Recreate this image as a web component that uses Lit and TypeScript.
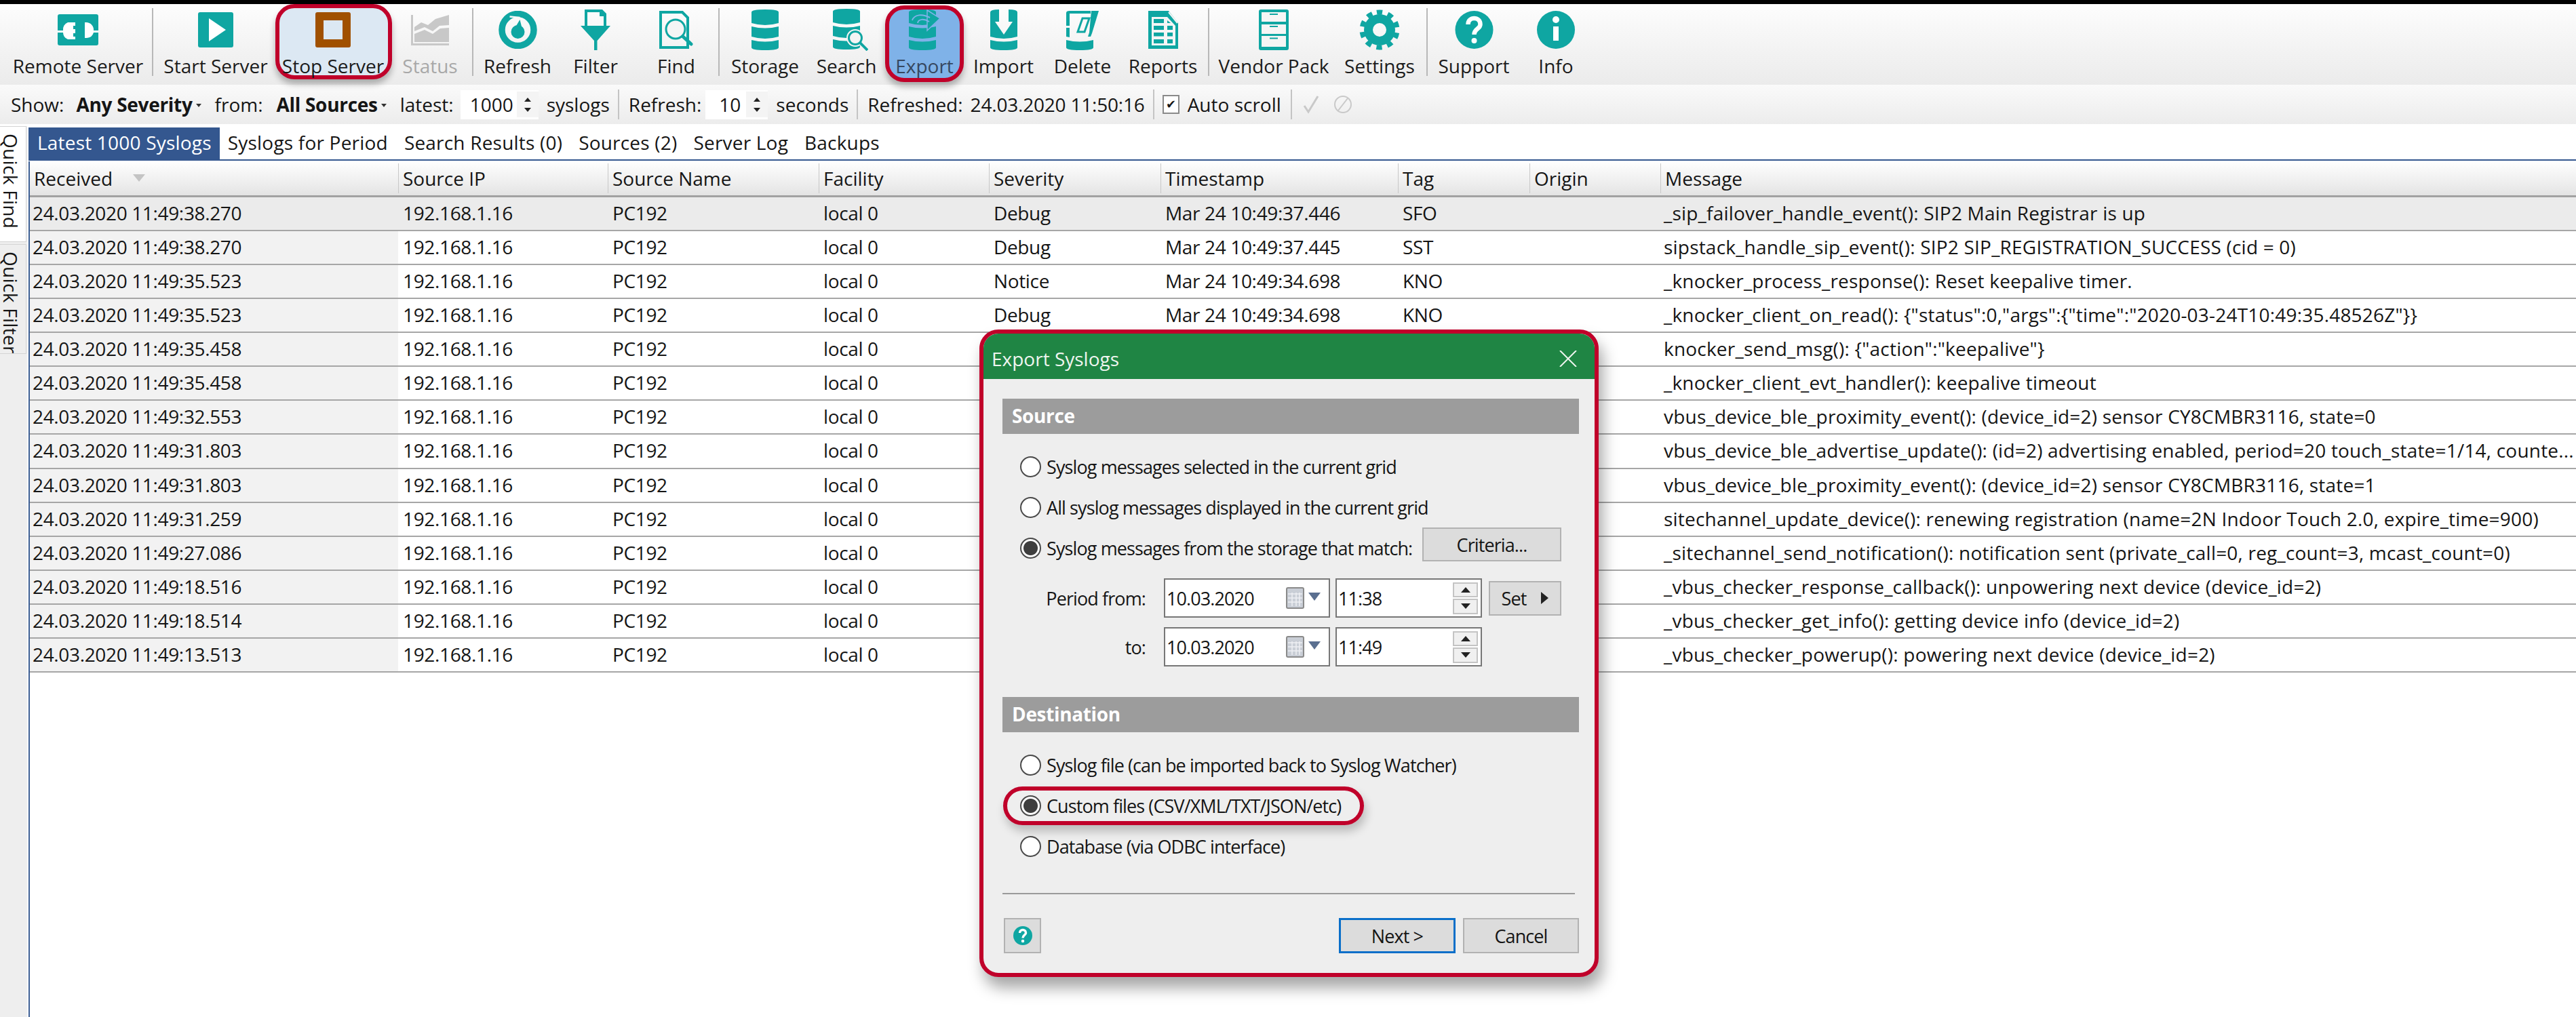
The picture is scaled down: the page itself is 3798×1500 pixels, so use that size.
import { LitElement, html, css } from "lit";
import { customElement } from "lit/decorators.js";

const T = "#0fa6a2";

const seg1 = "M0 4Q0 0 20 0T40 4V20Q20 26 0 20Z";
const seg2 = "M0 25Q20 30 40 25V40Q20 46 0 40Z";
const seg3 = "M0 45Q20 50 40 45V56Q40 60 20 60T0 56Z";

const icons: Record<string, unknown> = {
  remote: html`<svg width="60" height="46" viewBox="0 0 60 46">
    <rect width="60" height="46" rx="3" fill="${T}" />
    <path fill="#fff" d="M0 24h8a11 11 0 0 1 7-12h11v5h-3v5h3v6h-3v5h3v4H15a11 11 0 0 1-7-10H0Z" />
    <path fill="#fff" d="M40 12h3a11 11 0 0 1 10 12h7v3h-7a11 11 0 0 1-10 8h-3Z" />
  </svg>`,
  start: html`<svg width="52" height="52" viewBox="0 0 52 52">
    <rect width="52" height="52" rx="3" fill="${T}" />
    <path fill="#fff" d="M16 9L41 26L16 43Z" />
  </svg>`,
  stop: html`<svg width="52" height="52" viewBox="0 0 52 52">
    <path fill="#a05000" fill-rule="evenodd" d="M3 0H49Q52 0 52 3V49Q52 52 49 52H3Q0 52 0 49V3Q0 0 3 0ZM12 12V40H40V12Z" />
  </svg>`,
  status: html`<svg width="56" height="45" viewBox="0 0 56 45">
    <path fill="#c8c8c8" d="M0 0H3V42H56V45H0Z" />
    <path fill="#c8c8c8" d="M5 18L15 11L25 15L36 6L56 0V15L42 16L32 24L20 18L5 24Z" />
    <path fill="#c8c8c8" d="M5 28L20 22L32 28L43 20L56 19V40H5Z" />
  </svg>`,
  refresh: html`<svg width="57" height="56" viewBox="0 0 56 56">
    <circle cx="28" cy="28" r="23.5" fill="none" stroke="${T}" stroke-width="9.5" />
    <path stroke="#f7f7f7" stroke-width="2.5" fill="none" d="M16 8.500L31 10" />
    <circle cx="28" cy="31" r="10" fill="${T}" />
    <path fill="${T}" d="M25 23L31 13L34 25Z" />
  </svg>`,
  filter: html`<svg width="44" height="60" viewBox="0 0 44 60">
    <path fill="${T}" fill-rule="evenodd" d="M6 0H32L38 6V26H6ZM10 4V24H34V10H28V4Z" />
    <path fill="${T}" d="M0 24H44L24.5 46V60H20V46Z" />
  </svg>`,
  find: html`<svg width="50" height="56" viewBox="0 0 50 56">
    <path fill="none" stroke="${T}" stroke-width="4" d="M2 2H34L42 10V54H2Z" />
    <circle cx="24" cy="27" r="14" fill="#f5f5f5" stroke="${T}" stroke-width="3" />
    <path stroke="${T}" stroke-width="5" stroke-linecap="round" d="M35 38L47 49" />
  </svg>`,
  storage: html`<svg width="40" height="60" viewBox="0 0 40 60">
    <path fill="${T}" d="${seg1}" /><path fill="${T}" d="${seg2}" /><path fill="${T}" d="${seg3}" />
  </svg>`,
  search: html`<svg width="64" height="62" viewBox="-12 0 64 62">
    <path fill="${T}" d="${seg1}" /><path fill="${T}" d="${seg2}" /><path fill="${T}" d="${seg3}" />
    <circle cx="33" cy="43" r="13" fill="#f4f4f4" />
    <circle cx="33" cy="43" r="9.5" fill="#f4f4f4" stroke="${T}" stroke-width="3" />
    <path stroke="${T}" stroke-width="4" d="M40 50L51 61" />
  </svg>`,
  export: html`<svg width="47" height="60" viewBox="0 0 47 60">
    <path fill="${T}" d="${seg1}" /><path fill="${T}" d="${seg2}" /><path fill="${T}" d="${seg3}" />
    <path fill="${T}" stroke="#7fb2e8" stroke-width="1.5" d="M27 1L46 13L27 31Z" />
    <path fill="none" stroke="#7fb2e8" stroke-width="2" d="M5 16C8 7 20 6 31 12M13 20C14 14 22 13 30 18" />
  </svg>`,
  import: html`<svg width="40" height="60" viewBox="0 0 40 60">
    <path fill="${T}" d="M0 4Q0 0 13 0V18H7L20 37L33 18H27V0Q40 0 40 4V40Q20 46 0 40Z" />
    <path fill="${T}" d="${seg3}" />
  </svg>`,
  delete: html`<svg width="48" height="60" viewBox="0 0 48 60">
    <path fill="${T}" d="M0 5Q0 2 5 2H36V6H5V24H0ZM0 27H5V41L0 40Z" />
    <path fill="${T}" d="M37 2H48L38 35L36 40H32L34 34Z" />
    <path fill="none" stroke="${T}" stroke-width="3" d="M24 13H34L27 33H17Z" />
    <path fill="${T}" d="${seg3}" />
  </svg>`,
  reports: html`<svg width="44" height="56" viewBox="0 0 44 56">
    <path fill="${T}" d="M0 0H30L44 18V56H0Z" />
    <path fill="#f5f5f5" d="M5 9H28L40 22V51H5Z" />
    <path stroke="#f5f5f5" stroke-width="2" d="M30 2L43 18" />
    <path fill="${T}" d="M8 12H23V18H8ZM28 14V18H33ZM8 22H23V28H8ZM28 22H36V28H28ZM8 32H23V37.5H8ZM28 32H36V37.5H28ZM8 42H23V48H8ZM28 42H36V48H28Z" />
  </svg>`,
  vendor: html`<svg width="44" height="60" viewBox="0 0 44 60">
    <rect width="44" height="60" rx="3" fill="${T}" />
    <path fill="#f5f5f5" d="M4 4H40V18H4ZM4 22H40V36H4ZM4 39H40V55H4Z" />
    <path fill="${T}" d="M16 6H28V8H16ZM16 24H28V26H16ZM16 41.500H28V43.500H16Z" />
  </svg>`,
  settings: html`<svg width="60" height="60" viewBox="0 0 60 60">
    <circle cx="30" cy="30" r="16.5" fill="none" stroke="${T}" stroke-width="13" />
    <circle cx="30" cy="30" r="26" fill="none" stroke="${T}" stroke-width="7" stroke-dasharray="8.17 8.17" transform="rotate(-99 30 30)" />
  </svg>`,
  support: html`<svg width="57" height="56" viewBox="0 0 56 56">
    <circle cx="28" cy="28" r="28" fill="${T}" />
    <path fill="none" stroke="#fff" stroke-width="6.500" d="M19 20C19 8 37 8 37 20C37 27 28 26 28 35" />
    <circle cx="28" cy="44" r="4" fill="#fff" />
  </svg>`,
  info: html`<svg width="56" height="56" viewBox="0 0 56 56">
    <circle cx="28" cy="28" r="28" fill="${T}" />
    <circle cx="28" cy="13" r="5" fill="#fff" />
    <path fill="#fff" d="M24 23H32V44H24Z" />
  </svg>`,
};

type Tool = { label?: string; icon?: string; w?: number; ml?: number; cls?: string; sep?: boolean };

const tools: Tool[] = [
  { label: "Remote Server", icon: "remote", w: 218 },
  { sep: true },
  { label: "Start Server", icon: "start", w: 184 },
  { label: "Stop Server", icon: "stop", w: 162, cls: "stop" },
  { label: "Status", icon: "status", w: 124, cls: "off" },
  { sep: true },
  { label: "Refresh", icon: "refresh", w: 130 },
  { label: "Filter", icon: "filter", w: 100 },
  { label: "Find", icon: "find", w: 124, ml: 7 },
  { sep: true },
  { label: "Storage", icon: "storage", w: 134 },
  { label: "Search", icon: "search", w: 106 },
  { label: "Export", icon: "export", w: 124, cls: "export" },
  { label: "Import", icon: "import", w: 109 },
  { label: "Delete", icon: "delete", w: 124 },
  { label: "Reports", icon: "reports", w: 113 },
  { sep: true, ml: 10 },
  { label: "Vendor Pack", icon: "vendor", w: 190 },
  { label: "Settings", icon: "settings", w: 122 },
  { sep: true, ml: 8 },
  { label: "Support", icon: "support", w: 136 },
  { label: "Info", icon: "info", w: 106 },
];

const head = ["Received", "Source IP", "Source Name", "Facility", "Severity", "Timestamp", "Tag", "Origin", "Message"];

// rows 5 and below have their severity, timestamp and tag under the dialog
const rows: string[][] = [
  ["38.270", "Debug", "Mar 24 10:49:37.446", "SFO", "_sip_failover_handle_event(): SIP2 Main Registrar is up"],
  ["38.270", "Debug", "Mar 24 10:49:37.445", "SST", "sipstack_handle_sip_event(): SIP2 SIP_REGISTRATION_SUCCESS (cid = 0)"],
  ["35.523", "Notice", "Mar 24 10:49:34.698", "KNO", "_knocker_process_response(): Reset keepalive timer."],
  ["35.523", "Debug", "Mar 24 10:49:34.698", "KNO", '_knocker_client_on_read(): {"status":0,"args":{"time":"2020-03-24T10:49:35.48526Z"}}'],
  ["35.458", "", "", "", 'knocker_send_msg(): {"action":"keepalive"}'],
  ["35.458", "", "", "", "_knocker_client_evt_handler(): keepalive timeout"],
  ["32.553", "", "", "", "vbus_device_ble_proximity_event(): (device_id=2) sensor CY8CMBR3116, state=0"],
  ["31.803", "", "", "", "vbus_device_ble_advertise_update(): (id=2) advertising enabled, period=20 touch_state=1/14, counte..."],
  ["31.803", "", "", "", "vbus_device_ble_proximity_event(): (device_id=2) sensor CY8CMBR3116, state=1"],
  ["31.259", "", "", "", "sitechannel_update_device(): renewing registration (name=2N Indoor Touch 2.0, expire_time=900)"],
  ["27.086", "", "", "", "_sitechannel_send_notification(): notification sent (private_call=0, reg_count=3, mcast_count=0)"],
  ["18.516", "", "", "", "_vbus_checker_response_callback(): unpowering next device (device_id=2)"],
  ["18.514", "", "", "", "_vbus_checker_get_info(): getting device info (device_id=2)"],
  ["13.513", "", "", "", "_vbus_checker_powerup(): powering next device (device_id=2)"],
];

const calendar = html`<svg class="cal" width="27" height="32" viewBox="0 0 27 32">
  <rect x="1" y="1" width="25" height="30" rx="2" fill="#c9ced6" stroke="#8a8a8a" stroke-width="2" />
  <path stroke="#eef0f3" stroke-width="1.500" d="M3 10H24M3 16H24M3 22H24M9 8V28M15 8V28M20 8V28" />
</svg>`;

@customElement("app-root")
export class AppRoot extends LitElement {
  static styles = css`
    :host {
      display: block;
      position: relative;
      width: 3798px;
      height: 1500px;
      overflow: hidden;
      background: #fff;
      font-family: "Open Sans", "Noto Sans", sans-serif;
      font-size: 28px;
      color: #151515;
      white-space: nowrap;
    }
    .top {
      height: 6px;
      background: #000;
    }
    .toolbar {
      display: flex;
      height: 119px;
      background: linear-gradient(#fdfdfd, #ebebeb);
      box-sizing: border-box;
      padding-left: 6px;
    }
    .tool {
      position: relative;
      display: flex;
      flex-direction: column;
      align-items: center;
      flex: none;
      isolation: isolate;
    }
    .ico {
      height: 66px;
      margin-top: 5px;
      display: flex;
      align-items: center;
      justify-content: center;
    }
    .lbl {
      line-height: 40px;
      color: #1b1b1b;
    }
    .off .lbl {
      color: #a8a8a8;
    }
    .ring {
      position: absolute;
      z-index: -1;
      box-sizing: border-box;
      border: 6px solid #c0002a;
      border-radius: 28px;
      box-shadow: 0 7px 10px rgba(0, 0, 0, 0.28);
    }
    .stop .ring {
      left: -4px;
      right: -6px;
      top: 0;
      height: 111px;
      background: #dce8f3;
    }
    .export .ring {
      left: 4px;
      right: 4px;
      top: 2px;
      height: 113px;
      background: #7fb2e8;
    }
    .export .lbl {
      color: #36485f;
    }
    .sep {
      flex: none;
      width: 2px;
      height: 100px;
      margin-top: 6px;
      background: #b8b8b8;
    }
    .filters {
      display: flex;
      align-items: center;
      height: 58px;
      padding-left: 16px;
      background: linear-gradient(#fafafa, #ececec);
    }
    .filters b {
      font-weight: 700;
      letter-spacing: -0.3px;
    }
    .drop {
      width: 0;
      height: 0;
      margin: 2px 0 0 5px;
      border: 4px solid transparent;
      border-top: 5px solid #333;
      border-bottom: 0;
    }
    .spin {
      display: flex;
      align-items: center;
      justify-content: space-between;
      box-sizing: border-box;
      height: 43px;
      background: #fff;
      padding-left: 14px;
    }
    .spin-1000 {
      width: 115px;
      margin-left: 10px;
    }
    .spin-10 {
      width: 92px;
      margin-left: 6px;
      padding-left: 20px;
    }
    .arrows {
      display: flex;
      flex-direction: column;
      gap: 9px;
      align-items: center;
      justify-content: center;
      width: 32px;
      height: 38px;
      background: #f4f4f4;
    }
    .up,
    .down {
      display: block;
      width: 0;
      height: 0;
      border: 5px solid transparent;
    }
    .up {
      border-bottom: 6px solid #222;
      border-top: 0;
    }
    .down {
      border-top: 6px solid #222;
      border-bottom: 0;
    }
    .vsep {
      width: 2px;
      height: 44px;
      background: #c4c4c4;
    }
    .ml11 { margin-left: 11px; }
    .ml12 { margin-left: 12px; }
    .ml14 { margin-left: 14px; }
    .ml16 { margin-left: 16px; }
    .ml18 { margin-left: 18px; }
    .ml20 { margin-left: 20px; }
    .ml21 { margin-left: 21px; }
    .stamp {
      letter-spacing: -0.2px;
    }
    .check {
      box-sizing: border-box;
      width: 25px;
      height: 28px;
      border: 2px solid #8a8a8a;
      background: #fff;
      text-align: center;
      line-height: 22px;
      font-size: 18px;
    }
    .main {
      display: flex;
      height: 1317px;
      padding-top: 3px;
      box-sizing: border-box;
    }
    .side {
      width: 40px;
      flex: none;
      background: #eee;
    }
    .vtab {
      box-sizing: border-box;
      width: 39px;
      writing-mode: vertical-rl;
      line-height: 28px;
      padding: 10px 8px 0 0;
      letter-spacing: 0.3px;
      border: 1px solid #d4d4d4;
      border-left: 0;
    }
    .vtab.on {
      height: 171px;
      background: #fff;
    }
    .vtab.rest {
      height: 162px;
      margin-top: 3px;
    }
    .content {
      flex: 1;
      margin-left: 2px;
      border-left: 2px solid #3d5f94;
      margin-top: 52px;
      min-width: 0;
    }
    .tabs {
      display: flex;
      height: 47px;
      margin: -50px 0 0 -2px;
      align-items: stretch;
      border-bottom: 2px solid #34578f;
      line-height: 44px;
      letter-spacing: 0.2px;
    }
    .tab {
      padding: 0 12px;
    }
    .tab.on {
      padding: 0 12px 0 13px;
      background: #34578f;
      color: #fff;
    }
    .grid-row {
      display: grid;
      grid-template-columns: 543px 309px 311px 251px 253px 350px 194px 193px 1fr;
    }
    .ghead {
      height: 54px;
      box-sizing: border-box;
      background: linear-gradient(#fff, #e4e4e4);
      border-bottom: 3px solid #a2a2a2;
      align-items: center;
    }
    .hcell {
      display: flex;
      align-items: center;
      height: 44px;
      padding-left: 6px;
      border-left: 1px solid #c8c8c8;
    }
    .hcell:first-child {
      border-left: 0;
    }
    .sort {
      width: 0;
      height: 0;
      margin-left: 30px;
      border: 9px solid transparent;
      border-top: 11px solid #c4c4c4;
      border-bottom: 0;
    }
    .row {
      height: 50.07px;
      box-sizing: border-box;
      border-bottom: 2px solid #a6a6a6;
      line-height: 46px;
      letter-spacing: -0.35px;
    }
    .cell {
      padding-left: 7px;
      overflow: hidden;
    }
    .cell:first-child {
      padding-left: 4px;
      background: #f2f2f2;
    }
    .row.first,
    .row.first .cell:first-child {
      background: #ebebeb;
    }
    .cell:last-child {
      padding-left: 5px;
      letter-spacing: 0.2px;
    }
    .dialog {
      position: absolute;
      left: 1444px;
      top: 486px;
      width: 913px;
      height: 955px;
      box-sizing: border-box;
      border: 6px solid #c0002a;
      border-radius: 28px;
      background: #eee;
      box-shadow: 6px 16px 22px rgba(0, 0, 0, 0.35);
      overflow: hidden;
    }
    .title {
      display: flex;
      align-items: center;
      justify-content: space-between;
      height: 67px;
      padding: 7px 26px 0 12px;
      box-sizing: border-box;
      background: #1f8544;
      color: #eef5ef;
    }
    .body {
      padding: 29px 23px 0 28px;
      font-size: 27px;
      letter-spacing: -0.9px;
    }
    .section {
      height: 52px;
      line-height: 50px;
      padding-left: 14px;
      background: #9c9c9c;
      color: #fff;
      font-size: 28px;
      font-weight: 700;
      letter-spacing: -0.35px;
    }
    .radios {
      margin-top: 18px;
      padding-left: 26px;
    }
    .radio-row {
      position: relative;
      display: flex;
      align-items: center;
      height: 60px;
      gap: 8px;
    }
    .radio {
      box-sizing: border-box;
      width: 31px;
      height: 31px;
      flex: none;
      border: 2px solid #4a4a4a;
      border-radius: 50%;
      background: #fff;
    }
    .radio.on {
      background: radial-gradient(circle, #3e3e3e 0 10px, #fff 11px);
    }
    .btn {
      display: flex;
      align-items: center;
      justify-content: center;
      box-sizing: border-box;
      height: 51px;
      background: #dcdcdc;
      border: 2px solid #b2b2b2;
    }
    .criteria {
      width: 205px;
      height: 50px;
      margin: -10px 26px 0 auto;
    }
    .period {
      display: flex;
      align-items: center;
      height: 58px;
    }
    .period.from {
      margin-top: 15px;
    }
    .period.till {
      margin-top: 14px;
    }
    .plabel {
      width: 211px;
      text-align: right;
      margin-right: 27px;
    }
    .field {
      display: flex;
      align-items: center;
      box-sizing: border-box;
      height: 58px;
      border: 2px solid #777;
      background: #fff;
      padding-left: 2px;
    }
    .date {
      width: 245px;
      margin-right: 8px;
    }
    .cal {
      margin-left: auto;
    }
    .caret {
      width: 0;
      height: 0;
      margin: 0 12px 4px 6px;
      border: 9px solid transparent;
      border-top: 12px solid #5a6f90;
      border-bottom: 0;
    }
    .time {
      width: 216px;
    }
    .tspin {
      display: flex;
      flex-direction: column;
      gap: 2px;
      box-sizing: border-box;
      width: 37px;
      height: 47px;
      margin-left: auto;
      margin-right: 4px;
    }
    .tspin span {
      flex: 1;
      display: flex;
      align-items: center;
      justify-content: center;
      background: #f0f0f0;
      border: 2px solid #c4c4c4;
    }
    .tspin .up,
    .tspin .down {
      border-width: 7px;
    }
    .tspin .up {
      border-bottom-width: 8px;
      border-top-width: 0;
    }
    .tspin .down {
      border-top-width: 8px;
      border-bottom-width: 0;
    }
    .set {
      width: 107px;
      margin-left: 10px;
      gap: 22px;
    }
    .tri {
      width: 0;
      height: 0;
      border: 9px solid transparent;
      border-left: 11px solid #222;
      border-right: 0;
    }
    .dest {
      margin-top: 45px;
    }
    .hl {
      position: absolute;
      left: -25px;
      top: 2px;
      width: 532px;
      height: 57px;
      box-sizing: border-box;
      border: 6px solid #c0002a;
      border-radius: 29px;
      box-shadow: 3px 9px 14px rgba(0, 0, 0, 0.22);
      pointer-events: none;
    }
    .rule {
      height: 2px;
      margin: 39px 6px 0 0;
      background: #9a9a9a;
    }
    .actions {
      display: flex;
      gap: 11px;
      margin-top: 35px;
    }
    .actions .btn {
      height: 52px;
    }
    .help {
      width: 55px;
      margin: 0 auto 0 2px;
    }
    .next {
      width: 172px;
      border: 3px solid #0a6fc9 !important;
    }
    .cancel {
      width: 171px;
    }
  `;

  renderTool(t: Tool) {
    const ml = t.ml ? `margin-left:${t.ml}px` : "";
    if (t.sep) return html`<div class="sep" style="${ml}"></div>`;
    return html`<div class="tool ${t.cls ?? ""}" style="width:${t.w}px;${ml}">
      ${t.cls === "stop" || t.cls === "export" ? html`<div class="ring"></div>` : ""}
      <div class="ico">${icons[t.icon!]}</div>
      <div class="lbl">${t.label}</div>
    </div>`;
  }

  renderFilters() {
    const spin = html`<span class="arrows"><span class="up"></span><span class="down"></span></span>`;
    return html`<div class="filters">
      <span>Show:</span>
      <b class="ml18">Any Severity</b><span class="drop"></span>
      <span class="ml20">from:</span>
      <b class="ml20">All Sources</b><span class="drop"></span>
      <span class="ml20">latest:</span>
      <div class="spin spin-1000"><span>1000</span>${spin}</div>
      <span class="ml12">syslogs</span>
      <div class="vsep ml12"></div>
      <span class="ml14">Refresh:</span>
      <div class="spin spin-10"><span>10</span>${spin}</div>
      <span class="ml12">seconds</span>
      <div class="vsep ml12"></div>
      <span class="ml14">Refreshed:</span>
      <span class="ml11 stamp">24.03.2020 11:50:16</span>
      <div class="vsep ml12"></div>
      <div class="check ml12">✔</div>
      <span class="ml12">Auto scroll</span>
      <div class="vsep ml14"></div>
      <svg class="ml16" width="24" height="28" viewBox="0 0 24 28">
        <path fill="none" stroke="#c9c9c9" stroke-width="3" d="M2 16L8 25L22 2" />
      </svg>
      <svg class="ml21" width="28" height="28" viewBox="0 0 28 28">
        <circle cx="14" cy="14" r="12" fill="none" stroke="#c9c9c9" stroke-width="2" />
        <path stroke="#c9c9c9" stroke-width="2" d="M7 23L21 5" />
      </svg>
    </div>`;
  }

  renderGrid() {
    return html`<div class="grid-row ghead">
        ${head.map(
          (h, i) => html`<div class="hcell">${h}${i === 0 ? html`<span class="sort"></span>` : ""}</div>`
        )}
      </div>
      ${rows.map(
        (r, i) => html`<div class="grid-row row ${i === 0 ? "first" : ""}">
          <div class="cell">24.03.2020 11:49:${r[0]}</div>
          <div class="cell">192.168.1.16</div>
          <div class="cell">PC192</div>
          <div class="cell">local 0</div>
          <div class="cell">${r[1]}</div>
          <div class="cell">${r[2]}</div>
          <div class="cell">${r[3]}</div>
          <div class="cell"></div>
          <div class="cell">${r[4]}</div>
        </div>`
      )}`;
  }

  renderPeriod(cls: string, label: string, time: string) {
    return html`<div class="period ${cls}">
      <span class="plabel">${label}</span>
      <div class="field date"><span>10.03.2020</span>${calendar}<span class="caret"></span></div>
      <div class="field time">
        <span>${time}</span>
        <div class="tspin"><span><i class="up"></i></span><span><i class="down"></i></span></div>
      </div>
      ${cls === "from" ? html`<div class="btn set"><span>Set</span><span class="tri"></span></div>` : ""}
    </div>`;
  }

  renderDialog() {
    return html`<div class="dialog">
      <div class="title">
        <span>Export Syslogs</span>
        <svg width="26" height="24" viewBox="0 0 26 24">
          <path stroke="#eef5ef" stroke-width="2" d="M1 0L25 24M25 0L1 24" />
        </svg>
      </div>
      <div class="body">
        <div class="section">Source</div>
        <div class="radios">
          <div class="radio-row"><span class="radio"></span>Syslog messages selected in the current grid</div>
          <div class="radio-row"><span class="radio"></span>All syslog messages displayed in the current grid</div>
          <div class="radio-row">
            <span class="radio on"></span>Syslog messages from the storage that match:
            <div class="btn criteria">Criteria...</div>
          </div>
        </div>
        ${this.renderPeriod("from", "Period from:", "11:38")}
        ${this.renderPeriod("till", "to:", "11:49")}
        <div class="section dest">Destination</div>
        <div class="radios">
          <div class="radio-row"><span class="radio"></span>Syslog file (can be imported back to Syslog Watcher)</div>
          <div class="radio-row">
            <span class="radio on"></span>Custom files (CSV/XML/TXT/JSON/etc)
            <div class="hl"></div>
          </div>
          <div class="radio-row"><span class="radio"></span>Database (via ODBC interface)</div>
        </div>
        <div class="rule"></div>
        <div class="actions">
          <div class="btn help">
            <svg width="28" height="28" viewBox="0 0 56 56">
              <circle cx="28" cy="28" r="28" fill="${T}" />
              <path fill="none" stroke="#fff" stroke-width="7" d="M19 20C19 8 37 8 37 20C37 27 28 26 28 35" />
              <circle cx="28" cy="44" r="4.500" fill="#fff" />
            </svg>
          </div>
          <div class="btn next">Next &gt;</div>
          <div class="btn cancel">Cancel</div>
        </div>
      </div>
    </div>`;
  }

  render() {
    return html`
      <div class="top"></div>
      <div class="toolbar">${tools.map((t) => this.renderTool(t))}</div>
      ${this.renderFilters()}
      <div class="main">
        <div class="side">
          <div class="vtab on">Quick Find</div>
          <div class="vtab rest">Quick Filter</div>
        </div>
        <div class="content">
          <div class="tabs">
            <div class="tab on">Latest 1000 Syslogs</div>
            <div class="tab">Syslogs for Period</div>
            <div class="tab">Search Results (0)</div>
            <div class="tab">Sources (2)</div>
            <div class="tab">Server Log</div>
            <div class="tab">Backups</div>
          </div>
          ${this.renderGrid()}
        </div>
      </div>
      ${this.renderDialog()}
    `;
  }
}
